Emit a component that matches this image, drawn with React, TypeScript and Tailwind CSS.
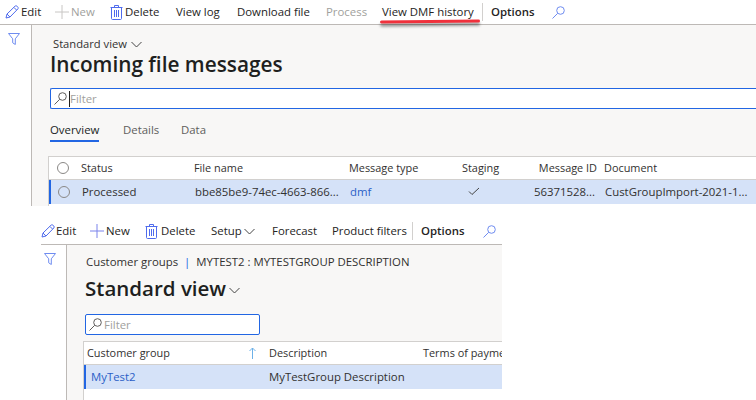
const font = "font-['Open_Sans','Liberation_Sans',sans-serif]";

const PencilIcon = () => (
  <svg width="14" height="14" viewBox="0 0 14 14" fill="none" stroke="#4f6bed" strokeWidth="1">
    <path d="M1 13l1-4L10 1.2c.6-.5 1.400-.5 2 0l.8.8c.5.6.5 1.400 0 2L5 12z" />
    <path d="M2 9l3 3M9 2.500l2.500 2.500" />
  </svg>
);

const PlusIcon = ({ color }: { color: string }) => (
  <svg width="14" height="14" viewBox="0 0 14 14" stroke={color} strokeWidth="1">
    <path d="M7 0v14M0 7h14" />
  </svg>
);

const TrashIcon = () => (
  <svg width="13" height="15" viewBox="0 0 13 15" fill="none" stroke="#4f6bed" strokeWidth="1">
    <path d="M.5 2.500h12M4.500 2.500V.5h4v2M1.500 2.500v11c0 .6.400 1 1 1h8c.6 0 1-.4 1-1v-11" />
    <path d="M4.500 5v7M6.500 5v7M8.500 5v7" />
  </svg>
);

const SearchIcon = ({ color }: { color: string }) => (
  <svg width="13" height="13" viewBox="0 0 13 13" fill="none" stroke={color} strokeWidth="1">
    <circle cx="8.500" cy="4.500" r="3.800" />
    <path d="M5.700 7.300L.5 12.500" />
  </svg>
);

const FunnelIcon = () => (
  <svg width="12" height="12" viewBox="0 0 12 12" fill="none" stroke="#6f8cf0" strokeWidth="1">
    <path d="M.5 .5h11L7.300 5.800v5.700L4.700 9.800V5.800z" />
  </svg>
);

const Chevron = ({ w = 11, color = "#444" }: { w?: number; color?: string }) => (
  <svg width={w} height="7" viewBox="0 0 11 7" fill="none" stroke={color} strokeWidth="1">
    <path d="M.5 1l5 5 5-5" />
  </svg>
);

const Radio = () => <div className="h-3 w-3 rounded-full border border-[#8a8886]" />;

const IncomingToolbar = () => (
  <div className="relative flex h-[25px] shrink-0 items-center whitespace-nowrap border-b border-[#bdb9b6] bg-white text-[11.4px] text-[#252423]">
    <div className="ml-[5px]"><PencilIcon /></div>
    <span className="ml-[2px] w-[20px]">Edit</span>
    <div className="ml-[14px]"><PlusIcon color="#c8c6c4" /></div>
    <span className="ml-[2px] w-[24px] text-[#a19f9d]">New</span>
    <div className="ml-[15px]"><TrashIcon /></div>
    <span className="ml-[2px] w-[34px]">Delete</span>
    <span className="ml-[17px] w-[44px]">View log</span>
    <span className="ml-[17px] w-[73px]">Download file</span>
    <span className="ml-[16px] w-[40px] text-[#a19f9d]">Process</span>
    <span className="ml-[16px] w-[93px]">View DMF history</span>
    <div className="ml-[7px] h-[18px] w-px bg-[#d2d0ce]" />
    <span className="ml-[8px] w-[43px] font-semibold">Options</span>
    <div className="ml-[18px]"><SearchIcon color="#6f8cf0" /></div>
    <div className="absolute left-[380px] top-[20px] h-[3px] w-[100px] -rotate-[0.6deg] rounded-full bg-[#f0313c] shadow-[0_3px_3px_rgba(0,0,0,0.45)]" />
  </div>
);

const IncomingTable = () => (
  <div className="mt-[14px] ml-[16px] h-[51px] whitespace-nowrap border-t border-l border-[#d2d0ce] bg-white text-[11.4px] text-[#323130]">
    <div className="flex h-[23px] items-center border-b border-[#d2d0ce] text-[10.9px]">
      <div className="ml-[8px] w-[24px]"><Radio /></div>
      <span className="w-[113px]">Status</span>
      <span className="w-[155px]">File name</span>
      <span className="w-[113px]">Message type</span>
      <span className="w-[60px]">Staging</span>
      <span className="w-[75px] text-right">Message ID</span>
      <span className="ml-[7px]">Document</span>
    </div>
    <div className="flex h-[24px] items-center border-l-[2px] border-[#2266e3] bg-[#d5e2f8] pb-[1px]">
      <div className="ml-[7px] w-[24px]"><Radio /></div>
      <span className="w-[113px]">Processed</span>
      <span className="w-[155px]">bbe85be9-74ec-4663-866...</span>
      <span className="w-[113px] text-[#2b5fc7]">dmf</span>
      <div className="w-[60px] pl-[5px]">
        <svg width="12" height="9" viewBox="0 0 12 9" fill="none" stroke="#444" strokeWidth="1">
          <path d="M1 4.500l3 3 7-6.500" />
        </svg>
      </div>
      <span className="w-[75px] pr-[3px] text-right">56371528...</span>
      <span className="ml-[7px]">CustGroupImport-2021-1...</span>
    </div>
  </div>
);

const IncomingPage = () => (
  <div className="flex h-[206px] flex-col overflow-hidden">
    <IncomingToolbar />
    <div className="flex min-h-0 flex-1">
      <div className="w-[32px] shrink-0 border-r border-[#bdb9b6] bg-white pl-[8px] pt-[8px]"><FunnelIcon /></div>
      <div className="min-w-0 flex-1 bg-[#f8f7f6]">
        <div className="ml-[21px] mt-[11px] flex items-center text-[11.2px] leading-[16px] text-[#323130]">
          Standard view
          <div className="ml-[4px]"><Chevron /></div>
        </div>
        <h1 className="ml-[18px] -mt-[1px] text-[20.8px] font-semibold leading-[26px] text-[#201f1e]">Incoming file messages</h1>
        <div className="ml-[18px] mt-[11px] flex h-[21px] items-center rounded-l-[2px] border border-r-0 border-[#2266e3] bg-white pl-[3px] text-[11.4px] text-[#a19f9d]">
          <SearchIcon color="#605e5c" />
          <div className="ml-[2px] h-[16px] w-px bg-[#201f1e]" />
          <span>Filter</span>
        </div>
        <div className="ml-[18px] mt-[12px] flex text-[11.4px] leading-[17px] text-[#605e5c]">
          <span className="w-[73px]">
            <span className="inline-block border-b-2 border-[#2266e3] pb-[2px] text-[#201f1e]">Overview</span>
          </span>
          <span className="w-[58px]">Details</span>
          <span>Data</span>
        </div>
        <IncomingTable />
      </div>
    </div>
  </div>
);

const GroupsToolbar = () => (
  <div className="flex h-[30px] shrink-0 items-center whitespace-nowrap border-b border-[#bdb9b6] bg-white pt-[3px] text-[11.4px] text-[#252423]">
    <PencilIcon />
    <span className="ml-[1px] w-[20px]">Edit</span>
    <div className="ml-[14px]"><PlusIcon color="#7b83eb" /></div>
    <span className="ml-[2px] w-[24px]">New</span>
    <div className="ml-[15px]"><TrashIcon /></div>
    <span className="ml-[3px] w-[34px]">Delete</span>
    <span className="ml-[16px] w-[30px]">Setup</span>
    <div className="ml-[3px]"><Chevron /></div>
    <span className="ml-[17px] w-[44px]">Forecast</span>
    <span className="ml-[16px] w-[74px]">Product filters</span>
    <div className="ml-[6px] h-[18px] w-px bg-[#d2d0ce]" />
    <span className="ml-[8px] w-[44px] font-semibold">Options</span>
    <div className="ml-[18px]"><SearchIcon color="#6f8cf0" /></div>
  </div>
);

const GroupsPage = () => (
  <div className="ml-[41px] mt-[9px] flex h-[185px] w-[461px] flex-col overflow-hidden">
    <GroupsToolbar />
    <div className="flex min-h-0 flex-1">
      <div className="w-[26px] shrink-0 border-r border-[#bdb9b6] bg-white pl-[3px] pt-[8px]"><FunnelIcon /></div>
      <div className="min-w-0 flex-1 bg-[#f8f7f6]">
        <div className="ml-[19px] mt-[9px] whitespace-nowrap text-[11.4px] leading-[16px] text-[#323130]">
          Customer groups <span className="mx-[3px] text-[#2266e3]">|</span> MYTEST2 : MYTESTGROUP DESCRIPTION
        </div>
        <div className="ml-[18px] mt-[2px] flex items-center text-[#201f1e]">
          <span className="text-[20.5px] font-semibold leading-[33px]">Standard view</span>
          <div className="ml-[3px] mt-[4px]"><Chevron /></div>
        </div>
        <div className="ml-[18px] mt-[9px] flex h-[21px] w-[175px] items-center rounded-[2px] border border-[#2266e3] bg-white pl-[3px] text-[11.4px] text-[#a19f9d]">
          <SearchIcon color="#605e5c" />
          <span className="ml-[2px]">Filter</span>
        </div>
        <div className="ml-[16px] mt-[6px] h-[59px] whitespace-nowrap border-t border-l border-[#d2d0ce] bg-white text-[11.4px] text-[#323130]">
          <div className="flex h-[23px] items-center border-b border-[#d2d0ce] text-[10.9px]">
            <span className="ml-[3px] w-[161px] shrink-0">Customer group</span>
            <svg className="w-[21px] shrink-0" width="21" height="12" viewBox="0 0 21 12" fill="none" stroke="#6db1e8" strokeWidth="1">
              <path d="M4.500 12V1M1.500 4l3-3 3 3" />
            </svg>
            <span className="w-[154px] shrink-0">Description</span>
            <span className="shrink-0">Terms of payme</span>
          </div>
          <div className="flex h-[24px] items-center border-l-[2px] border-[#2266e3] bg-[#d5e2f8]">
            <span className="ml-[5px] w-[178px] shrink-0 text-[#2b5fc7]">MyTest2</span>
            <span className="shrink-0">MyTestGroup Description</span>
          </div>
        </div>
      </div>
    </div>
  </div>
);

export default function App() {
  return (
    <div className={`h-[400px] w-[756px] overflow-hidden bg-white ${font}`}>
      <IncomingPage />
      <GroupsPage />
    </div>
  );
}
